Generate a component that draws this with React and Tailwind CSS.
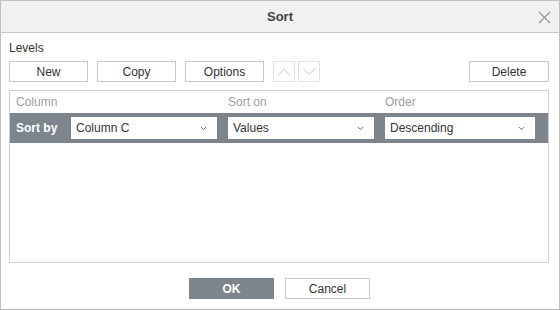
import { ChevronDown } from "lucide-react";

const BUTTONS = ["New", "Copy", "Options"];

function Select({ value, className }) {
  return (
    <div
      className={`flex h-[22px] items-center justify-between bg-white pl-[5px] pr-[9px] text-[12px] text-[#333] ${className}`}
    >
      <span>{value}</span>
      <ChevronDown size={9} strokeWidth={2.5} className="text-[#555]" />
    </div>
  );
}

function Arrow({ up }) {
  return (
    <svg width="14" height="8" viewBox="0 0 14 8" fill="none" stroke="#c0c0c0" strokeWidth="1">
      <path d={up ? "M1 7.5 L7 1.5 L13 7.5" : "M1 0.5 L7 6.5 L13 0.5"} />
    </svg>
  );
}

export default function App() {
  return (
    <div className="flex h-[310px] w-[560px] flex-col border border-[#c0c0c0] bg-white font-['Liberation_Sans',Arial,sans-serif] text-[12px] text-[#333]">
      <div className="relative flex h-[32px] shrink-0 items-center justify-center border-b border-[#c8c8c8] bg-[#f1f1f1]">
        <span className="text-[13px] font-bold text-[#444]">Sort</span>
        <svg
          width="13"
          height="13"
          viewBox="0 0 13 13"
          stroke="#999"
          strokeWidth="1.3"
          className="absolute right-[8px] top-[10px]"
        >
          <path d="M1 1 L12 12 M12 1 L1 12" />
        </svg>
      </div>

      <div className="flex flex-1 flex-col pl-[8px] pr-[10px]">
        <div className="mt-[8px] h-[14px] leading-[14px]">Levels</div>

        <div className="mt-[6px] flex h-[21px] items-stretch">
          {BUTTONS.map((label) => (
            <button
              key={label}
              className="mr-[9px] w-[79px] border border-[#c8c8c8] bg-white text-[12px] leading-[18px] text-[#333]"
            >
              {label}
            </button>
          ))}
          <button className="flex w-[22px] items-center justify-center border border-[#e2e2e2] bg-white">
            <Arrow up />
          </button>
          <button className="ml-[3px] flex w-[22px] items-center justify-center border border-[#e2e2e2] bg-white">
            <Arrow />
          </button>
          <button className="ml-auto w-[80px] border border-[#c8c8c8] bg-white text-[12px] leading-[18px] text-[#333]">
            Delete
          </button>
        </div>

        <div className="mt-[8px] flex h-[173px] flex-col border border-[#d0d0d0]">
          <div className="flex h-[22px] items-center text-[12px] text-[#a0a0a0]">
            <span className="w-[218px] pl-[6px]">Column</span>
            <span className="w-[157px]">Sort on</span>
            <span>Order</span>
          </div>
          <div className="flex h-[30px] items-center bg-[#7d858c] pl-[6px]">
            <span className="w-[55px] text-[12px] font-bold text-white">Sort by</span>
            <Select value="Column C" className="w-[146px]" />
            <Select value="Values" className="ml-[11px] w-[146px]" />
            <Select value="Descending" className="ml-[11px] w-[150px]" />
          </div>
        </div>

        <div className="mt-[15px] flex justify-center gap-[11px] pl-[1px]">
          <button className="h-[21px] w-[85px] bg-[#7d858c] text-[12px] font-bold text-white">OK</button>
          <button className="h-[21px] w-[85px] border border-[#c8c8c8] bg-white text-[12px] text-[#333]">
            Cancel
          </button>
        </div>
      </div>
    </div>
  );
}
